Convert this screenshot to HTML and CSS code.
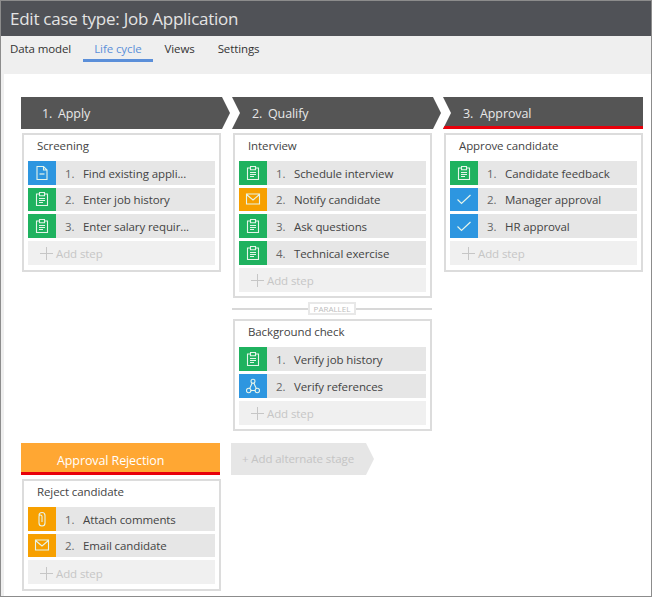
FILE: index.html
```html
<!DOCTYPE html>
<html lang="en">
<head>
<meta charset="utf-8">
<title>Edit case type: Job Application</title>
<link rel="stylesheet" href="styles.css">
</head>
<body>
<svg class="defs" aria-hidden="true">
  <symbol id="i-form" viewBox="0 0 16 16"><path d="M2.500 3h3V1.500h5V3h3v11.500h-11z M5.500 3v1.800h5V3 M5 7.500h6 M5 9.500h6 M5 11.500h4" fill="none" stroke="currentColor" stroke-width="1.100"/></symbol>
  <symbol id="i-doc" viewBox="0 0 16 16"><path d="M3 1.500h6.500L13 5v9.500H3z M9.500 1.500V5H13" fill="none" stroke="currentColor" stroke-width="1.100"/><path d="M5.500 9h5" stroke="currentColor" stroke-width="1.200"/></symbol>
  <symbol id="i-mail" viewBox="0 0 16 16"><path d="M1.500 3h13v10h-13z M1.500 3.500L8 9l6.500-5.500" fill="none" stroke="currentColor" stroke-width="1.100"/></symbol>
  <symbol id="i-check" viewBox="0 0 16 16"><path d="M1.500 8.500l4 4L14.500 4" fill="none" stroke="currentColor" stroke-width="1.200"/></symbol>
  <symbol id="i-flow" viewBox="0 0 16 16"><g fill="none" stroke="currentColor" stroke-width="1.100"><circle cx="8" cy="3.200" r="2"/><circle cx="3.700" cy="12.500" r="2.200"/><circle cx="12.300" cy="12.500" r="2.200"/><path d="M7.200 5L4.700 10.500M8.800 5l2.500 5.500M5.900 12.500h4.200"/></g></symbol>
  <symbol id="i-clip" viewBox="0 0 16 16"><path d="M5 4.500a3 3 0 0 1 6 0v7.500a3 3 0 0 1-6 0V5.500a1.500 1.500 0 0 1 3 0V11" fill="none" stroke="currentColor" stroke-width="1.100"/></symbol>
</svg>
<div class="window">
  <header class="titlebar">Edit case type: Job Application</header>
  <nav class="tabs">
    <a class="tab tab-first">Data model</a>
    <a class="tab tab-active">Life cycle</a>
    <a class="tab">Views</a>
    <a class="tab">Settings</a>
  </nav>
  <main class="content">
    <div class="board">
      <section class="column">
        <h2 class="stage stage-first"><span class="stage-num">1.</span>Apply</h2>
        <div class="card">
          <h3 class="card-title">Screening</h3>
          <div class="step"><span class="step-icon blue"><svg><use href="#i-doc"/></svg></span><span class="num">1.</span><span class="label">Find existing appli...</span></div>
          <div class="step"><span class="step-icon green"><svg><use href="#i-form"/></svg></span><span class="num">2.</span><span class="label">Enter job history</span></div>
          <div class="step"><span class="step-icon green"><svg><use href="#i-form"/></svg></span><span class="num">3.</span><span class="label">Enter salary requir...</span></div>
          <div class="add-step"><span class="plus"></span>Add step</div>
        </div>
      </section>
      <section class="column">
        <h2 class="stage stage-mid"><span class="stage-num">2.</span>Qualify</h2>
        <div class="card">
          <h3 class="card-title">Interview</h3>
          <div class="step"><span class="step-icon green"><svg><use href="#i-form"/></svg></span><span class="num">1.</span><span class="label">Schedule interview</span></div>
          <div class="step"><span class="step-icon orange"><svg><use href="#i-mail"/></svg></span><span class="num">2.</span><span class="label">Notify candidate</span></div>
          <div class="step"><span class="step-icon green"><svg><use href="#i-form"/></svg></span><span class="num">3.</span><span class="label">Ask questions</span></div>
          <div class="step"><span class="step-icon green"><svg><use href="#i-form"/></svg></span><span class="num">4.</span><span class="label">Technical exercise</span></div>
          <div class="add-step"><span class="plus"></span>Add step</div>
        </div>
        <div class="parallel"><span class="parallel-chip">PARALLEL</span></div>
        <div class="card">
          <h3 class="card-title">Background check</h3>
          <div class="step"><span class="step-icon green"><svg><use href="#i-form"/></svg></span><span class="num">1.</span><span class="label">Verify job history</span></div>
          <div class="step"><span class="step-icon blue"><svg><use href="#i-flow"/></svg></span><span class="num">2.</span><span class="label">Verify references</span></div>
          <div class="add-step"><span class="plus"></span>Add step</div>
        </div>
      </section>
      <section class="column">
        <h2 class="stage stage-last"><span class="stage-num">3.</span>Approval</h2>
        <div class="card">
          <h3 class="card-title">Approve candidate</h3>
          <div class="step"><span class="step-icon green"><svg><use href="#i-form"/></svg></span><span class="num">1.</span><span class="label">Candidate feedback</span></div>
          <div class="step"><span class="step-icon blue"><svg><use href="#i-check"/></svg></span><span class="num">2.</span><span class="label">Manager approval</span></div>
          <div class="step"><span class="step-icon blue"><svg><use href="#i-check"/></svg></span><span class="num">3.</span><span class="label">HR approval</span></div>
          <div class="add-step"><span class="plus"></span>Add step</div>
        </div>
      </section>
      <section class="column">
        <h2 class="stage stage-alt">Approval Rejection</h2>
        <div class="card">
          <h3 class="card-title">Reject candidate</h3>
          <div class="step"><span class="step-icon orange"><svg><use href="#i-clip"/></svg></span><span class="num">1.</span><span class="label">Attach comments</span></div>
          <div class="step"><span class="step-icon orange"><svg><use href="#i-mail"/></svg></span><span class="num">2.</span><span class="label">Email candidate</span></div>
          <div class="add-step"><span class="plus"></span>Add step</div>
        </div>
      </section>
      <section class="column">
        <div class="add-stage">+ Add alternate stage</div>
      </section>
    </div>
  </main>
</div>
</body>
</html>
```
FILE: styles.css
```css
* { box-sizing: border-box; }
html, body { margin: 0; padding: 0; background: #fff; }
body { font-family: "Open Sans", "Liberation Sans", sans-serif; font-size: 11.5px; letter-spacing: -0.1px; color: #444; overflow: hidden; }
.defs { width: 0; height: 0; display: block; overflow: hidden; }
.window { width: 652px; height: 597px; border: 1px solid #8c8c8c; display: flex; flex-direction: column; background: #efefef; }
.titlebar { flex: none; height: 35px; padding-left: 9px; background: #505257; color: #e4e4e4; font-size: 17px; letter-spacing: -0.25px; line-height: 35px; }
.tabs { flex: none; height: 38px; display: flex; align-items: flex-start; background: #efefef; }
.tab { height: 26px; padding: 0 11.5px; line-height: 25px; color: #333; border-bottom: 3px solid transparent; }
.tab-first { padding-left: 9px; }
.tab-active { color: #5b8fd9; border-bottom-color: #5b8fd9; }
.content { flex: 1; margin-left: 3px; background: #fff; padding: 23px 0 0 17px; overflow: hidden; }
.board { display: grid; grid-template-columns: repeat(3, 200px); column-gap: 11px; row-gap: 11.6px; align-items: start; }
.column { display: flex; flex-direction: column; }
.stage { height: 32px; margin: 0 0 4px; padding-left: 20px; font-size: 12.5px; font-weight: 400; line-height: 34px; color: #e8e8e8; background: #555; }
.stage-num { display: inline-block; width: 16px; }
.stage-first { width: 209px; padding-left: 21px; clip-path: polygon(0 0, 201px 0, 209px 50%, 201px 100%, 0 100%); }
.stage-mid { width: 209px; clip-path: polygon(0 0, 201px 0, 209px 50%, 201px 100%, 0 100%, 8px 50%); }
.stage-last { clip-path: polygon(0 0, 100% 0, 100% 100%, 0 100%, 8px 50%); border-bottom: 3px solid #e8000b; }
.stage-last .stage-num { width: 17px; }
.stage-alt { width: 199px; padding-left: 36px; color: #fff; background: #ffa733; border-bottom: 3px solid #e8000b; line-height: 35px; }
.card { width: 199px; margin-left: 1px; padding: 0 4px 4.7px; border: 2px solid #dcdcdc; background: #fff; display: flex; flex-direction: column; gap: 3px; }
.card-title { height: 24px; margin: 0 0 -1px; padding-left: 9px; font-size: 11.5px; font-weight: 400; line-height: 22px; color: #444; }
.step { height: 23.67px; display: flex; align-items: center; background: #e6e6e6; }
.step-icon { flex: none; width: 28px; height: 100%; display: flex; align-items: center; justify-content: center; color: #e6f5ea; }
.step-icon svg { width: 16px; height: 16px; }
.green { background: #1fb25f; }
.blue { background: #2d96e0; }
.orange { background: #f7a000; }
.num { width: 18px; margin-left: 9px; padding-top: 0.6px; color: #666; }
.label { white-space: nowrap; padding-top: 0.6px; color: #444; }
.add-step { height: 24px; display: flex; align-items: center; padding: 2px 0 0 12px; background: #f0f0f0; color: #c6c6c6; }
.plus { width: 13px; height: 13px; margin-right: 3px; background: linear-gradient(#c6c6c6, #c6c6c6) center / 100% 1px no-repeat, linear-gradient(#c6c6c6, #c6c6c6) center / 1px 100% no-repeat; }
.parallel { width: 200px; height: 21px; display: flex; align-items: center; justify-content: center; background: linear-gradient(#d8d8d8, #d8d8d8) center / 100% 2px no-repeat; }
.parallel-chip { width: 48px; height: 13px; border: 2px solid #e8e8e8; background: #fff; color: #bdbdbd; font-size: 8px; letter-spacing: 0; line-height: 9px; text-align: center; }
.add-stage { width: 143px; height: 32px; margin-left: -1px; padding-left: 11px; line-height: 32px; color: #c4c4c4; background: #e6e6e6; clip-path: polygon(0 0, 135px 0, 143px 50%, 135px 100%, 0 100%); }
```
